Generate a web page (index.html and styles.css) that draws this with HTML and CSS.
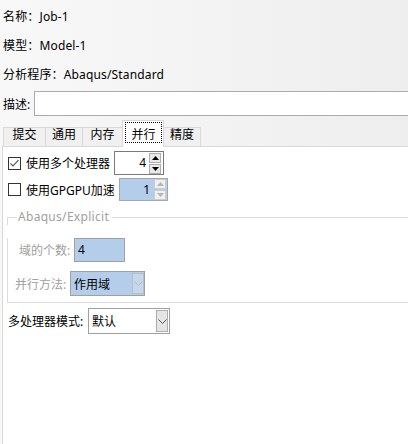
FILE: index.html
```html
<!DOCTYPE html>
<html lang="zh-CN">
<head>
<meta charset="utf-8">
<link rel="stylesheet" href="styles.css">
</head>
<body>
<div class="info">
  <div class="info-row">名称：Job-1</div>
  <div class="info-row">模型：Model-1</div>
  <div class="info-row">分析程序：Abaqus/Standard</div>
  <div class="desc-row"><span class="desc-label">描述:</span><div class="desc-input"></div></div>
</div>
<div class="tabs">
  <div class="tab t1">提交</div>
  <div class="tab t2">通用</div>
  <div class="tab t3">内存</div>
  <div class="tab sel"><span class="focus">并行</span></div>
  <div class="tab t5">精度</div>
</div>
<div class="panel">
  <div class="row r1">
    <label class="chk w1">
      <svg class="box" width="13" height="13" viewBox="0 0 13 13"><rect x="0.5" y="0.5" width="12" height="12" fill="#fff" stroke="#333"/><polyline points="2.5,6.5 5,9 10.5,3.2" fill="none" stroke="#5a5a5a" stroke-width="1.2"/></svg>
      <span>使用多个处理器</span>
    </label>
    <div class="spin s1">
      <span class="val">4</span>
      <div class="btns">
        <span class="btn"><svg width="7" height="4" viewBox="0 0 7 4"><polygon points="0,4 3.5,0 7,4" fill="#000"/></svg></span>
        <span class="btn"><svg width="7" height="4" viewBox="0 0 7 4"><polygon points="0,0 3.5,4 7,0" fill="#000"/></svg></span>
      </div>
    </div>
  </div>
  <div class="row r2">
    <label class="chk w2">
      <svg class="box" width="13" height="13" viewBox="0 0 13 13"><rect x="0.5" y="0.5" width="12" height="12" fill="#fff" stroke="#333"/></svg>
      <span>使用GPGPU加速</span>
    </label>
    <div class="spin s2">
      <span class="val">1</span>
      <div class="btns">
        <span class="btn off"><svg width="7" height="4" viewBox="0 0 7 4"><polygon points="0,4 3.5,0 7,4" fill="#b4b4b4"/></svg></span>
        <span class="btn off"><svg width="7" height="4" viewBox="0 0 7 4"><polygon points="0,0 3.5,4 7,0" fill="#b4b4b4"/></svg></span>
      </div>
    </div>
  </div>
  <div class="group">
    <div class="ghead"><span class="gtitle">Abaqus/Explicit</span></div>
    <div class="gbody">
      <div class="row fa">
        <span class="flabel">域的个数:</span>
        <div class="field">4</div>
      </div>
      <div class="row fb">
        <span class="flabel">并行方法:</span>
        <div class="combo blue">
          <span class="ctext">作用域</span>
          <span class="cbtn off"><svg width="9" height="5" viewBox="0 0 9 5"><polyline points="0.5,0.5 4.5,4.5 8.5,0.5" fill="none" stroke="#b8b8b8"/></svg></span>
        </div>
      </div>
    </div>
  </div>
  <div class="row rc">
    <span class="clabel">多处理器模式:</span>
    <div class="combo white">
      <span class="ctext">默认</span>
      <span class="cbtn"><svg width="9" height="5" viewBox="0 0 9 5"><polyline points="0.5,0.5 4.5,4.5 8.5,0.5" fill="none" stroke="#555"/></svg></span>
    </div>
  </div>
</div>
</body>
</html>
```
FILE: styles.css
```css
* { box-sizing: border-box; margin: 0; padding: 0; }
html, body { width: 408px; height: 444px; overflow: hidden; }
body {
  font-family: "Noto Sans", "Noto Sans CJK SC", sans-serif;
  font-size: 12px;
  color: #000;
  background: linear-gradient(to right, #f8f8f8, #eeeeee);
}
.info { padding-top: 2px; }
.info-row { height: 29px; line-height: 29px; padding-left: 3px; letter-spacing: 0.15px; }
.desc-row { display: flex; align-items: center; margin-top: 2px; height: 25px; padding-left: 3px; margin-right: -6px; }
.desc-label { width: 31px; }
.desc-input { flex: 1; height: 25px; border: 1px solid #ababab; background: #fff; }

.tabs { display: flex; align-items: flex-end; height: 30px; padding-left: 3px; }
.tab {
  border: 1px solid #d9d9d9; border-bottom: 0;
  background: #f0f0f0;
  height: 19px; line-height: 14px; padding-bottom: 4px;
  text-align: center; margin-left: -1px;
}
.tab:first-child { margin-left: 0; }
.t1 { width: 43px; }
.t2 { width: 38px; }
.t3 { width: 41px; }
.t5 { width: 38px; }
.sel {
  width: 42px; height: 27px; margin-bottom: -1px;
  background: #fff; position: relative; z-index: 1;
  padding: 1px 1px 4px 2px;
}
.focus { display: block; border: 1px dotted #000; padding-top: 5px; height: 21px; line-height: 14px; }

.panel {
  margin-left: 2px; margin-right: -10px;
  border-left: 1px solid #d9d9d9; border-top: 1px solid #d9d9d9;
  background: #fff; height: 298px; overflow: hidden;
}
.row { display: flex; align-items: center; }
.r1 { margin-top: 4px; height: 24px; }
.r2 { margin-top: 3px; height: 23px; }
.chk { display: flex; align-items: center; gap: 5px; padding-left: 5px; }
.chk .box { flex: none; }
.w1 { width: 111px; }
.w2 { width: 116px; }

.spin { display: flex; border: 1px solid #7a7a7a; background: #fff; }
.s1 { width: 50px; height: 24px; }
.s2 { width: 49px; height: 23px; background: #b3cdea; border-color: #a0a8b4; }
.val { flex: 1; text-align: right; line-height: 21px; }
.s1 .val { padding-right: 3px; }
.s2 .val { padding-right: 4px; }
.btns { display: flex; flex-direction: column; justify-content: center; gap: 1px; }
.s1 .btns { padding-right: 2px; }
.s2 .btns { padding-right: 1px; }
.btn {
  width: 12px; height: 10px;
  border: 1px solid #adadad; background: #e8e8e8;
  display: flex; align-items: center; justify-content: center;
}
.btn.off { border-color: #cccccc; background: #f0f0f0; }

.group { margin: 8px -20px 0 4px; }
.ghead { display: flex; height: 16px; }
.ghead::before, .ghead::after {
  content: ""; box-sizing: border-box; align-self: flex-end; height: 8px;
  border-top: 1px solid #dcdcdc;
}
.ghead::before { width: 10px; flex: none; border-left: 1px solid #dcdcdc; }
.ghead::after { flex: 1; }
.gtitle { padding: 0 3px 0 1px; line-height: 16px; color: #a0a0a0; letter-spacing: 0.3px; }
.gbody { border-left: 1px solid #dcdcdc; border-bottom: 1px solid #dcdcdc; padding-bottom: 6px; }
.fa { margin-top: 13px; height: 24px; padding-left: 11px; }
.fb { margin-top: 9px; height: 25px; padding-left: 7px; }
.flabel { width: 55px; color: #a0a0a0; }
.field {
  width: 51px; height: 24px; border: 1px solid #a0a0a0;
  background: #b3cdea; padding-left: 3px; line-height: 22px;
}
.combo { display: flex; align-items: center; border: 1px solid #a0a0a0; }
.combo .ctext { flex: 1; padding-left: 3px; }
.combo.blue { width: 75px; height: 25px; background: #b3cdea; }
.combo.white { width: 82px; height: 26px; background: #fff; }
.cbtn {
  width: 12px; height: calc(100% - 2px);
  border: 1px solid #adadad; background: #e5e5e5;
  display: flex; align-items: center; justify-content: center;
}
.combo.white .cbtn { margin-right: 1px; }
.cbtn.off { background: #c7d7ea; border-color: #b4c0ce; }
.rc { margin-top: 5px; height: 26px; }
.clabel { width: 85px; padding-left: 5px; }
```
